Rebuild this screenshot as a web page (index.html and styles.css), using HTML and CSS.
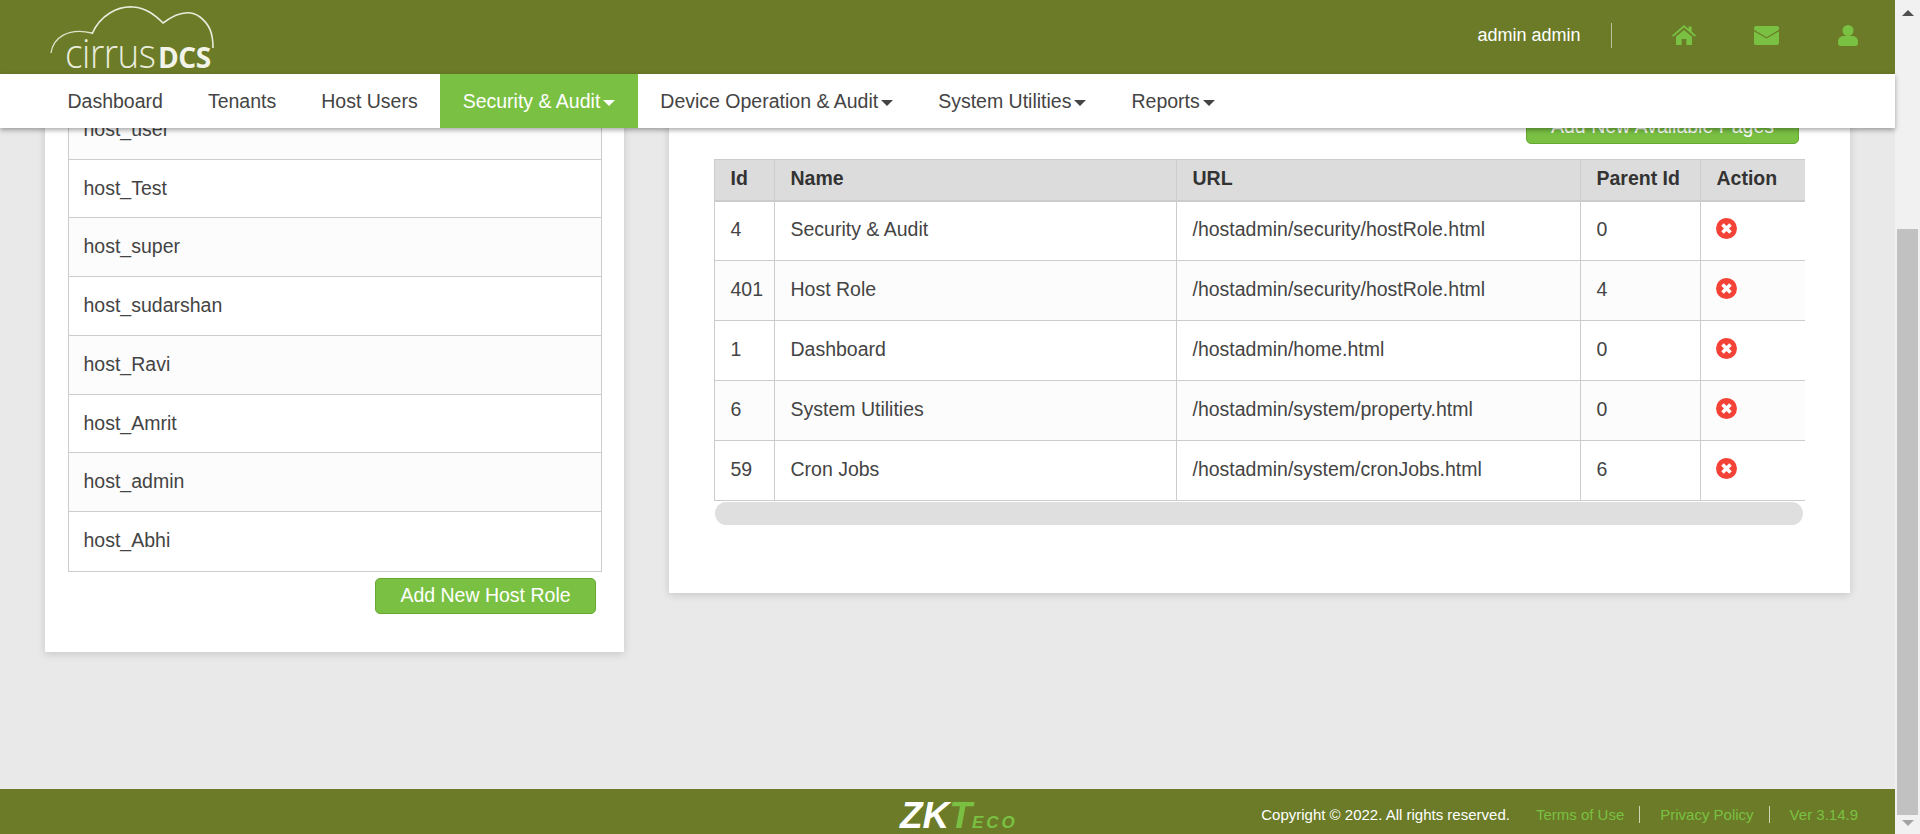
FILE: index.html
```html
<!DOCTYPE html>
<html lang="en">
<head>
    <meta charset="UTF-8">
    <meta name="viewport" content="width=device-width, initial-scale=1.0">
    <title>CirrusDCS - Host Role</title>
    <link rel="stylesheet" href="styles.css">
</head>
<body>
    <div class="page">
        <header class="topbar">
            <a class="logo" href="#">
                <svg class="logo-cloud" width="240" height="74" viewBox="0 0 240 74" fill="none">
                    <path d="M51 53C53 38 68 27 92 33" stroke="#dfe3cb" stroke-width="1.3"/>
                    <path d="M92 34C100 15 118 6 133 7C147 8 156 16 163 23C175 14 188 8 200 17C209 24 213 32 213 48" stroke="#e9ecdc" stroke-width="1.6"/>
                </svg>
                <span class="logo-cirrus">cirrus</span><span class="logo-dcs">DCS</span>
            </a>
            <div class="user-box">
                <span class="user-name">admin admin</span>
                <span class="user-sep"></span>
                <a class="top-icon home" href="#">
                    <svg width="24" height="20" viewBox="0 0 24 20"><path fill="#7ac143" d="M12 0l4.6 4V1.500h3v5.100L24 10.400l-1.200 1.400L12 2.600 1.200 11.800 0 10.400zM4 11.800l8-6.800 8 6.800V20h-5.600v-6H9.600v6H4z"/></svg>
                </a>
                <a class="top-icon mail" href="#">
                    <svg width="25" height="19" viewBox="0 0 25 19"><path fill="#7ac143" d="M2 0h21a2 2 0 0 1 2 2v1.800l-12.500 7.400L0 3.800V2a2 2 0 0 1 2-2zM0 5.200l12.500 7.400L25 5.200V17a2 2 0 0 1-2 2H2a2 2 0 0 1-2-2z"/></svg>
                </a>
                <a class="top-icon person" href="#">
                    <svg width="20" height="21" viewBox="0 0 20 21"><circle fill="#7ac143" cx="10" cy="5.500" r="5.500"/><path fill="#7ac143" d="M0 17c0-4 2.500-6 6-6h8c3.500 0 6 2 6 6v1c0 2-1.200 3-3 3H3c-1.800 0-3-1-3-3z"/></svg>
                </a>
            </div>
        </header>

        <nav class="mainnav">
            <a href="#">Dashboard</a>
            <a href="#">Tenants</a>
            <a href="#">Host Users</a>
            <a href="#" class="active">Security &amp; Audit<span class="caret"></span></a>
            <a href="#">Device Operation &amp; Audit<span class="caret"></span></a>
            <a href="#">System Utilities<span class="caret"></span></a>
            <a href="#">Reports<span class="caret"></span></a>
        </nav>

        <main class="content">
            <section class="card card-roles">
                <ul class="role-list">
                    <li>host_user</li>
                    <li>host_Test</li>
                    <li>host_super</li>
                    <li>host_sudarshan</li>
                    <li>host_Ravi</li>
                    <li>host_Amrit</li>
                    <li>host_admin</li>
                    <li>host_Abhi</li>
                </ul>
                <div class="role-actions">
                    <button class="btn btn-role">Add New Host Role</button>
                </div>
            </section>

            <section class="card card-pages">
                <div class="pages-actions">
                    <button class="btn btn-pages">Add New Available Pages</button>
                </div>
                <div class="table-wrap">
                    <table class="pages-table">
                        <thead>
                            <tr>
                                <th class="col-id">Id</th>
                                <th class="col-name">Name</th>
                                <th class="col-url">URL</th>
                                <th class="col-parent">Parent Id</th>
                                <th class="col-action">Action</th>
                            </tr>
                        </thead>
                        <tbody>
                            <tr>
                                <td>4</td>
                                <td>Security &amp; Audit</td>
                                <td>/hostadmin/security/hostRole.html</td>
                                <td>0</td>
                                <td><svg class="del" width="21" height="21" viewBox="0 0 21 21"><circle cx="10.500" cy="10.500" r="10.500" fill="#f44336"/><path d="M6.500 6.500l8 8M14.500 6.500l-8 8" stroke="#fff" stroke-width="3.600"/></svg></td>
                            </tr>
                            <tr>
                                <td>401</td>
                                <td>Host Role</td>
                                <td>/hostadmin/security/hostRole.html</td>
                                <td>4</td>
                                <td><svg class="del" width="21" height="21" viewBox="0 0 21 21"><circle cx="10.500" cy="10.500" r="10.500" fill="#f44336"/><path d="M6.500 6.500l8 8M14.500 6.500l-8 8" stroke="#fff" stroke-width="3.600"/></svg></td>
                            </tr>
                            <tr>
                                <td>1</td>
                                <td>Dashboard</td>
                                <td>/hostadmin/home.html</td>
                                <td>0</td>
                                <td><svg class="del" width="21" height="21" viewBox="0 0 21 21"><circle cx="10.500" cy="10.500" r="10.500" fill="#f44336"/><path d="M6.500 6.500l8 8M14.500 6.500l-8 8" stroke="#fff" stroke-width="3.600"/></svg></td>
                            </tr>
                            <tr>
                                <td>6</td>
                                <td>System Utilities</td>
                                <td>/hostadmin/system/property.html</td>
                                <td>0</td>
                                <td><svg class="del" width="21" height="21" viewBox="0 0 21 21"><circle cx="10.500" cy="10.500" r="10.500" fill="#f44336"/><path d="M6.500 6.500l8 8M14.500 6.500l-8 8" stroke="#fff" stroke-width="3.600"/></svg></td>
                            </tr>
                            <tr>
                                <td>59</td>
                                <td>Cron Jobs</td>
                                <td>/hostadmin/system/cronJobs.html</td>
                                <td>6</td>
                                <td><svg class="del" width="21" height="21" viewBox="0 0 21 21"><circle cx="10.500" cy="10.500" r="10.500" fill="#f44336"/><path d="M6.500 6.500l8 8M14.500 6.500l-8 8" stroke="#fff" stroke-width="3.600"/></svg></td>
                            </tr>
                        </tbody>
                    </table>
                </div>
                <div class="hscroll"></div>
            </section>
        </main>

        <footer class="footer">
            <div class="zk-logo"><span class="zk">ZK</span><span class="zk-t">T</span><span class="zk-eco">ECO</span></div>
            <div class="foot-links">
                <span class="copyright">Copyright © 2022. All rights reserved.</span>
                <a href="#">Terms of Use</a>
                <a href="#" class="sep">Privacy Policy</a>
                <a href="#" class="sep">Ver 3.14.9</a>
            </div>
        </footer>
    </div>

    <div class="vscroll">
        <span class="arrow-up"></span>
        <span class="thumb"></span>
        <span class="arrow-down"></span>
    </div>
</body>
</html>
```

FILE: styles.css
```css
html, body {
    height: 100%;
}
body {
    margin: 0;
    display: flex;
    overflow: hidden;
    font-family: "Liberation Sans", Arial, sans-serif;
    background-color: #e9e9e9;
    color: #444;
}
a {
    text-decoration: none;
}
.page {
    flex: 1;
    min-width: 0;
    display: flex;
    flex-direction: column;
}

/* top olive bar */
.topbar {
    height: 74px;
    flex-shrink: 0;
    display: flex;
    justify-content: space-between;
    background-color: #6b7b27;
}
.logo {
    position: relative;
    width: 240px;
    padding-left: 65px;
    box-sizing: border-box;
    display: flex;
    align-items: baseline;
    color: #e9ecdc;
}
.logo-cloud {
    position: absolute;
    left: 0;
    top: 0;
}
.logo-cirrus {
    width: 93px;
    font-family: "Open Sans", sans-serif;
    font-weight: 300;
    font-size: 40px;
    line-height: 74px;
    letter-spacing: -0.5px;
    transform: translateY(16px) scaleX(0.92);
    transform-origin: left;
}
.logo-dcs {
    font-family: "Open Sans", sans-serif;
    font-weight: 700;
    font-size: 29px;
    line-height: 74px;
    letter-spacing: -0.5px;
    color: #f2f4ea;
    transform: translateY(16px) scaleX(0.97);
    transform-origin: left;
}
.user-box {
    display: flex;
    align-items: center;
    height: 70px;
    padding-right: 37px;
}
.user-name {
    font-size: 18px;
    color: #fff;
}
.user-sep {
    width: 1px;
    height: 25px;
    margin: 0 60px 0 30px;
    background-color: #b9c29a;
}
.top-icon {
    display: flex;
}
.top-icon.mail {
    margin-left: 58.5px;
}
.top-icon.person {
    margin-left: 59px;
}

/* main menu */
.mainnav {
    position: relative;
    z-index: 2;
    height: 54px;
    flex-shrink: 0;
    display: flex;
    padding-left: 45px;
    background-color: #fff;
    box-shadow: 0 2px 5px rgba(0, 0, 0, 0.35);
}
.mainnav a {
    padding: 0 22.5px;
    line-height: 54px;
    font-size: 19.5px;
    color: #444;
}
.mainnav a.active {
    background-color: #7ac143;
    color: #fff;
}
.caret {
    display: inline-block;
    margin-left: 3px;
    vertical-align: middle;
    border-top: 6px solid #444;
    border-left: 6px solid transparent;
    border-right: 6px solid transparent;
}
.active .caret {
    border-top-color: #fff;
}

/* cards */
.content {
    flex: 1;
    min-height: 0;
    overflow: hidden;
    display: flex;
    align-items: flex-start;
    gap: 45px;
    padding-left: 45px;
}
.card {
    margin-top: -60px;
    box-sizing: border-box;
    background-color: #fff;
    box-shadow: 0 2px 8px rgba(0, 0, 0, 0.15);
}
.card-roles {
    width: 579px;
    padding: 33px 22px 38px 23px;
}
.card-pages {
    width: 1181px;
    padding: 40px 45px 68px;
}
.role-list {
    list-style: none;
    margin: 0;
    padding: 0;
    border: 1px solid #ccc;
    border-top: none;
}
.role-list li {
    height: 58.73px;
    box-sizing: border-box;
    padding-left: 14.5px;
    line-height: 57px;
    font-size: 19.5px;
    border-bottom: 1px solid #ccc;
}
.role-list li:last-child {
    border-bottom: none;
}
.role-list li:nth-child(odd) {
    background-color: #fcfcfc;
}
.role-actions {
    display: flex;
    justify-content: flex-end;
    padding: 6px 6px 0 0;
}
.btn {
    height: 36px;
    box-sizing: border-box;
    padding: 0;
    font-family: inherit;
    font-size: 19.5px;
    color: #fff;
    background-color: #7ac143;
    border: 1px solid #66a832;
    border-radius: 5px;
}
.btn-role {
    width: 221px;
}
.btn-pages {
    width: 273px;
}
.pages-actions {
    display: flex;
    justify-content: flex-end;
    padding-right: 6px;
}

/* table */
.table-wrap {
    margin-top: 15px;
    overflow: hidden;
}
.pages-table {
    width: 1100px;
    table-layout: fixed;
    border-collapse: collapse;
    font-size: 19.5px;
}
.pages-table th, .pages-table td {
    box-sizing: border-box;
    padding: 0 16px 2px 15.5px;
    text-align: left;
    border: 1px solid #ccc;
}
.pages-table th {
    height: 41px;
    font-size: 19.5px;
    color: #333;
    background-color: #dcdcdc;
    border-bottom-width: 2px;
}
.pages-table td {
    height: 60px;
    color: #444;
}
.pages-table tbody tr:nth-child(even) {
    background-color: #fcfcfc;
}
.col-id {
    width: 60px;
}
.col-name {
    width: 402px;
}
.col-url {
    width: 404px;
}
.col-parent {
    width: 120px;
}
.del {
    display: block;
    margin: -3px 0 0 -1px;
}
.hscroll {
    height: 23px;
    margin: 1px 2px 0 1px;
    border-radius: 12px;
    background-color: #dfdfdf;
}

/* footer */
.footer {
    height: 45px;
    flex-shrink: 0;
    display: flex;
    align-items: center;
    justify-content: space-between;
    padding: 0 37px 0 900px;
    background-color: #6b7b27;
}
.zk-logo {
    display: flex;
    align-items: baseline;
    font-style: italic;
    font-weight: bold;
    line-height: 45px;
    transform: translateY(7px);
}
.zk {
    font-size: 37px;
    color: #fff;
}
.zk-t {
    font-size: 37px;
    color: #7ac143;
}
.zk-eco {
    font-size: 17px;
    color: #7ac143;
    letter-spacing: 3px;
}
.foot-links {
    display: flex;
    align-items: center;
    padding-top: 5px;
    font-size: 15px;
}
.copyright {
    color: #fff;
    margin-right: 26px;
}
.foot-links a {
    color: #7ac143;
}
.foot-links a.sep {
    margin-left: 15px;
    padding-left: 20px;
    border-left: 1px solid #cfd6b3;
}

/* page scrollbar */
.vscroll {
    width: 25px;
    flex-shrink: 0;
    display: flex;
    flex-direction: column;
    align-items: center;
    background-color: #f1f1f1;
}
.arrow-up {
    margin-top: 10px;
    border-bottom: 6px solid #505050;
    border-left: 6px solid transparent;
    border-right: 6px solid transparent;
}
.thumb {
    width: 21px;
    height: 586px;
    margin-top: 213px;
    background-color: #c1c1c1;
}
.arrow-down {
    margin-top: 5px;
    border-top: 6px solid #a3a3a3;
    border-left: 6px solid transparent;
    border-right: 6px solid transparent;
}
```
